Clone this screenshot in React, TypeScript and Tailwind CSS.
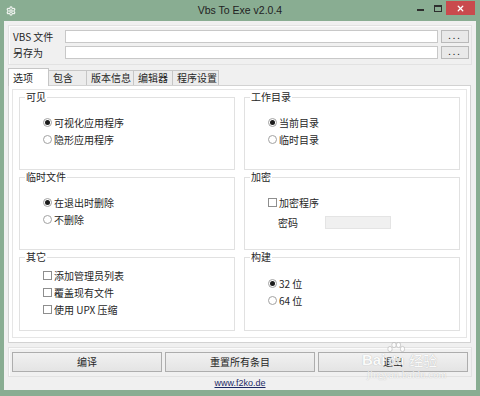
import React from 'react';
import { Settings, X } from 'lucide-react';

const Radio = ({ checked, label }: { checked?: boolean; label: string }) => (
  <div className="flex items-center h-[17px]">
    <span className="w-[9px] h-[9px] rounded-full border border-[#a2a2a2] bg-white flex items-center justify-center">
      {checked && <span className="w-[5px] h-[5px] rounded-full bg-[#1c1c1c]" />}
    </span>
    <span className="ml-[2px]">{label}</span>
  </div>
);

const Check = ({ label }: { label: string }) => (
  <div className="flex items-center h-[17px]">
    <span className="w-[9px] h-[9px] border border-[#8e8e8e] bg-white" />
    <span className="ml-[2px]">{label}</span>
  </div>
);

const Group = ({ title, className = '', children }: { title: string; className?: string; children?: React.ReactNode }) => (
  <div className={`relative border border-[#e1e1e1] pl-[23px] ${className}`}>
    <span className="absolute -top-[7px] left-[5px] bg-white px-[1px] leading-[12px]">{title}</span>
    {children}
  </div>
);

const tabs = [
  { label: '包含', w: 'w-[38px]' },
  { label: '版本信息', w: 'w-[47px]' },
  { label: '编辑器', w: 'w-[39px]' },
  { label: '程序设置', w: 'w-[46px]' },
];

// faint watermark stamped on the screenshot
const Watermark = () => (
  <div className="absolute left-[362px] top-[338px] pointer-events-none text-white opacity-80 [text-shadow:0_0_1px_#9a9a9a]">
    <div className="flex items-end h-[30px]">
      <span className="text-[15px] leading-[16px] font-bold font-['Liberation_Sans',sans-serif]">Bai</span>
      <span className="relative flex flex-col items-center w-[22px]">
        <svg width="20" height="14" viewBox="0 0 20 14" className="mb-[-2px]">
          <g fill="#fff" stroke="#a8a8a8" strokeWidth="0.6">
            <ellipse cx="4" cy="7" rx="2.2" ry="2.6" />
            <ellipse cx="8" cy="3" rx="2.2" ry="2.6" />
            <ellipse cx="12.5" cy="3" rx="2.2" ry="2.6" />
            <ellipse cx="16.5" cy="7" rx="2.2" ry="2.6" />
          </g>
        </svg>
        <span className="text-[13px] leading-[14px] font-bold font-['Liberation_Sans',sans-serif]">du</span>
      </span>
      <span className="ml-[2px] text-[14px] leading-[16px]">经验</span>
    </div>
    <div className="ml-[5px] mt-[1px] text-[10px] leading-[12px] font-['Liberation_Serif',serif] tracking-[0.3px]">jingyan.baidu.com</div>
  </div>
);

export default function App() {
  return (
    <div className="relative w-[480px] h-[396px] bg-[#89ad92] flex flex-col text-[10px] text-[#262626] font-['Noto_Sans_CJK_SC',sans-serif] overflow-hidden">
      {/* title bar */}
      <div className="h-[21px] grid grid-cols-[1fr_auto_1fr]">
        <div className="flex items-center pl-[6px]">
          <Settings size={10} strokeWidth={3} className="text-[#eef2ee]" />
        </div>
        <div className="flex items-center text-[10.5px] text-[#222] font-['Liberation_Sans',sans-serif]">
          Vbs To Exe v2.0.4
        </div>
        <div className="flex justify-end items-start">
          <span className="mt-[9px] mr-[10px] w-[7px] h-[2px] bg-[#2e2e2e]" />
          <span className="mt-[5px] mr-[4px] w-[8px] h-[7px] border border-t-2 border-[#2e2e2e]" />
          <span className="mt-[1px] mr-[5px] w-[29px] h-[14px] bg-[#c94a4d] flex items-center justify-center">
            <X size={9} strokeWidth={3.5} className="text-white" />
          </span>
        </div>
      </div>

      {/* client area */}
      <div className="mx-[4px] h-[369px] bg-[#f0f0f0] flex flex-col">
        {/* file inputs */}
        <div className="mt-[4px] ml-[4px] w-[464px] h-[40px] border border-[#e2e2e2] shadow-[inset_1px_1px_0_#fbfbfb] pl-[4px] pr-[2px] pt-[4px] flex flex-col gap-[3px]">
          <div className="flex items-center h-[13px]">
            <span className="w-[52px] leading-[13px]">VBS 文件</span>
            <div className="flex-1 h-[13px] border border-[#c8c8c8] bg-white" />
            <div className="ml-[3px] w-[28px] h-[13px] border border-[#b9b9b9] bg-[#e9e9e9] flex items-center justify-center text-[9px] leading-none tracking-[2px] pb-[2px]">...</div>
          </div>
          <div className="flex items-center h-[13px]">
            <span className="w-[52px] leading-[13px]">另存为</span>
            <div className="flex-1 h-[13px] border border-[#c8c8c8] bg-white" />
            <div className="ml-[3px] w-[28px] h-[13px] border border-[#b9b9b9] bg-[#e9e9e9] flex items-center justify-center text-[9px] leading-none tracking-[2px] pb-[2px]">...</div>
          </div>
        </div>

        {/* tabs */}
        <div className="mt-[3px] ml-[4px] h-[17px] flex items-end">
          <div className="relative z-10 -mb-px w-[41px] h-[18px] bg-white border border-b-0 border-[#c6c6c6] pl-[4px] flex items-center">
            选项
          </div>
          {tabs.map((t) => (
            <div
              key={t.label}
              className={`${t.w} h-[15px] border border-l-0 border-b-0 border-[#c6c6c6] bg-[#ececec] pl-[4px] flex items-center`}
            >
              {t.label}
            </div>
          ))}
        </div>

        {/* tab page */}
        <div className="ml-[4px] w-[463px] h-[259px] border border-[#d2d2d2] bg-white p-[3px] pb-[4px]">
          <div className="h-full border border-[#e6e6e6] px-[6px] pt-[7px] grid grid-cols-2 gap-x-[9px] gap-y-[7px] grid-rows-[73px_73px_74px]">
            <Group title="可见" className="pt-[16px]">
              <Radio checked label="可视化应用程序" />
              <Radio label="隐形应用程序" />
            </Group>
            <Group title="工作目录" className="pt-[16px]">
              <Radio checked label="当前目录" />
              <Radio label="临时目录" />
            </Group>
            <Group title="临时文件" className="pt-[16px]">
              <Radio checked label="在退出时删除" />
              <Radio label="不删除" />
            </Group>
            <Group title="加密" className="pt-[16px]">
              <Check label="加密程序" />
              <div className="mt-[5px] flex items-center h-[13px]">
                <span className="ml-[10px] w-[47px]">密码</span>
                <div className="w-[66px] h-[13px] bg-[#f0f0f0] border border-[#e4e4e4]" />
              </div>
            </Group>
            <Group title="其它" className="pt-[9px]">
              <Check label="添加管理员列表" />
              <Check label="覆盖现有文件" />
              <Check label="使用 UPX 压缩" />
            </Group>
            <Group title="构建" className="pt-[17px]">
              <Radio checked label="32 位" />
              <Radio label="64 位" />
            </Group>
          </div>
        </div>

        {/* buttons */}
        <div className="mt-[4px] ml-[4px] w-[464px] h-[30px] border border-[#e2e2e2] shadow-[inset_1px_1px_0_#fbfbfb] px-[3px] pt-[4px] flex gap-[3px]">
          {['编译', '重置所有条目', '退出'].map((b) => (
            <div
              key={b}
              className="w-[150px] h-[20px] border border-[#adadad] bg-gradient-to-b from-[#f1f1f1] to-[#e4e4e4] flex items-center justify-center"
            >
              {b}
            </div>
          ))}
        </div>

        <div className="flex-1 flex items-center justify-center">
          <span className="text-[9px] text-[#1d2a66] underline font-['Liberation_Sans',sans-serif]">www.f2ko.de</span>
        </div>
      </div>

      <Watermark />
    </div>
  );
}
